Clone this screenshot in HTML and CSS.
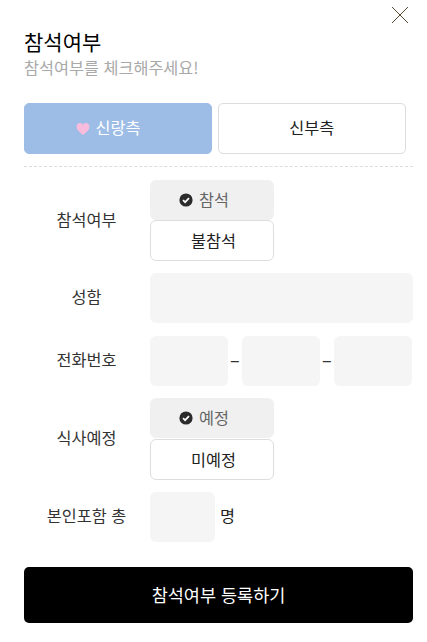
FILE: index.html
```html
<!DOCTYPE html>
<html lang="ko">
<head>
<meta charset="utf-8">
<title>참석여부</title>
<link rel="stylesheet" href="styles.css">
</head>
<body>
<main class="modal">
  <button class="close" aria-label="닫기">
    <svg width="18" height="18" viewBox="0 0 18 18"><path d="M1 1 L17 17 M17 1 L1 17" stroke="#5b4a32" stroke-width="1" fill="none"/></svg>
  </button>
  <h1 class="title">참석여부</h1>
  <p class="subtitle">참석여부를 체크해주세요!</p>
  <div class="sides">
    <div class="side side-on">
      <svg class="heart" width="14" height="14" viewBox="0 0 15 14"><path d="M7.5 13.5 C3 10 .6 7.6 .6 4.4 C.6 2 2.4 .6 4.2 .6 C5.6 .6 6.8 1.3 7.5 2.6 C8.2 1.3 9.4 .6 10.8 .6 C12.6 .6 14.4 2 14.4 4.4 C14.4 7.6 12 10 7.5 13.5 Z" fill="#f9bcdc"/></svg>
      <span>신랑측</span>
    </div>
    <div class="side">신부측</div>
  </div>
  <hr class="divider">
  <div class="row row-attend">
    <div class="label">참석여부</div>
    <div class="options">
      <div class="opt opt-on">
        <svg width="14" height="14" viewBox="0 0 14 14"><circle cx="7" cy="7" r="6.6" fill="#2b2b2b"/><path d="M4 7.2 L6.1 9.2 L10 5.2" stroke="#fff" stroke-width="1.7" fill="none"/></svg>
        <span>참석</span>
      </div>
      <div class="opt">불참석</div>
    </div>
  </div>
  <div class="row row-name">
    <div class="label">성함</div>
    <div class="input input-full"></div>
  </div>
  <div class="row row-phone">
    <div class="label">전화번호</div>
    <div class="phone">
      <div class="input input-tel"></div>
      <span class="dash">–</span>
      <div class="input input-tel"></div>
      <span class="dash">–</span>
      <div class="input input-tel"></div>
    </div>
  </div>
  <div class="row row-meal">
    <div class="label">식사예정</div>
    <div class="options">
      <div class="opt opt-on">
        <svg width="14" height="14" viewBox="0 0 14 14"><circle cx="7" cy="7" r="6.6" fill="#2b2b2b"/><path d="M4 7.2 L6.1 9.2 L10 5.2" stroke="#fff" stroke-width="1.7" fill="none"/></svg>
        <span>예정</span>
      </div>
      <div class="opt opt-gap">미예정</div>
    </div>
  </div>
  <div class="row row-count">
    <div class="label">본인포함 총</div>
    <div class="input input-count"></div>
    <span class="unit">명</span>
  </div>
  <button class="submit">참석여부 등록하기</button>
</main>
</body>
</html>
```
FILE: styles.css
```css
* { box-sizing: border-box; }
html, body { margin: 0; padding: 0; background: #fff; }
body {
  width: 427px;
  height: 642px;
  overflow: hidden;
  font-family: "Noto Sans CJK KR", "Noto Sans", sans-serif;
  font-size: 16.3px;
  color: #333;
}
.modal {
  position: relative;
  width: 427px;
  height: 642px;
  padding: 28px 14px 0 24px;
  display: flex;
  flex-direction: column;
}
.close {
  position: absolute;
  top: 6px;
  right: 18px;
  width: 18px;
  height: 18px;
  padding: 0;
  border: 0;
  background: none;
  line-height: 0;
}
.title {
  margin: 0;
  height: 26px;
  font-size: 21px;
  line-height: 26px;
  font-weight: 400;
  color: #000;
}
.subtitle {
  margin: 0;
  height: 26px;
  font-size: 16.3px;
  line-height: 26px;
  font-weight: 400;
  color: #a9a9a9;
}
.sides {
  display: flex;
  gap: 6px;
  margin-top: 23px;
  width: 382px;
}
.side {
  width: 187.5px;
  height: 51px;
  padding-bottom: 4px;
  border: 1px solid #ddd;
  border-radius: 5px;
  display: flex;
  align-items: center;
  justify-content: center;
  gap: 6px;
  color: #222;
}
.side-on {
  width: 188px;
  padding-right: 20px;
  border-color: #9dbde6;
  background: #9dbde6;
  color: #fff;
}
.heart { margin-top: 4px; }
.divider {
  margin: 12px 0 13px;
  width: 389px;
  height: 0;
  border: 0;
  border-top: 1px dashed #ddd;
}
.row {
  display: flex;
  align-items: center;
}
.label {
  width: 126px;
  flex: none;
  padding-right: 1px;
  padding-bottom: 4px;
  text-align: center;
  color: #333;
}
.options {
  display: flex;
  flex-direction: column;
  width: 124px;
}
.opt {
  height: 41px;
  padding-left: 3px;
  padding-bottom: 2px;
  border: 1px solid #ddd;
  border-radius: 6px;
  display: flex;
  align-items: center;
  justify-content: center;
  gap: 6px;
  color: #222;
  background: #fff;
}
.opt-on {
  height: 40px;
  padding-left: 0;
  padding-right: 16px;
  padding-bottom: 3px;
  border: 0;
  background: #f0f0f0;
  color: #666;
}
.opt-on svg { margin-top: 3px; }
.opt-gap { margin-top: 1px; }
.input {
  height: 50px;
  background: #f5f5f5;
  border-radius: 6px;
}
.input-full { width: 263px; }
.input-tel { width: 77.5px; }
.input-count { width: 64.5px; }
.row-name { margin-top: 12px; }
.row-phone { margin-top: 13px; }
.row-meal { margin-top: 12px; }
.row-count { margin-top: 12px; }
.phone {
  display: flex;
  align-items: center;
}
.dash {
  width: 14.5px;
  padding-bottom: 4px;
  font-size: 18px;
  text-align: center;
  color: #333;
}
.unit {
  margin-left: 5.5px;
  padding-bottom: 4px;
  color: #222;
}
.submit {
  margin-top: 25px;
  width: 389px;
  height: 56px;
  padding: 0 0 2px;
  border: 0;
  border-radius: 5px;
  background: #000;
  color: #fff;
  font: inherit;
  font-size: 17.5px;
}
```
